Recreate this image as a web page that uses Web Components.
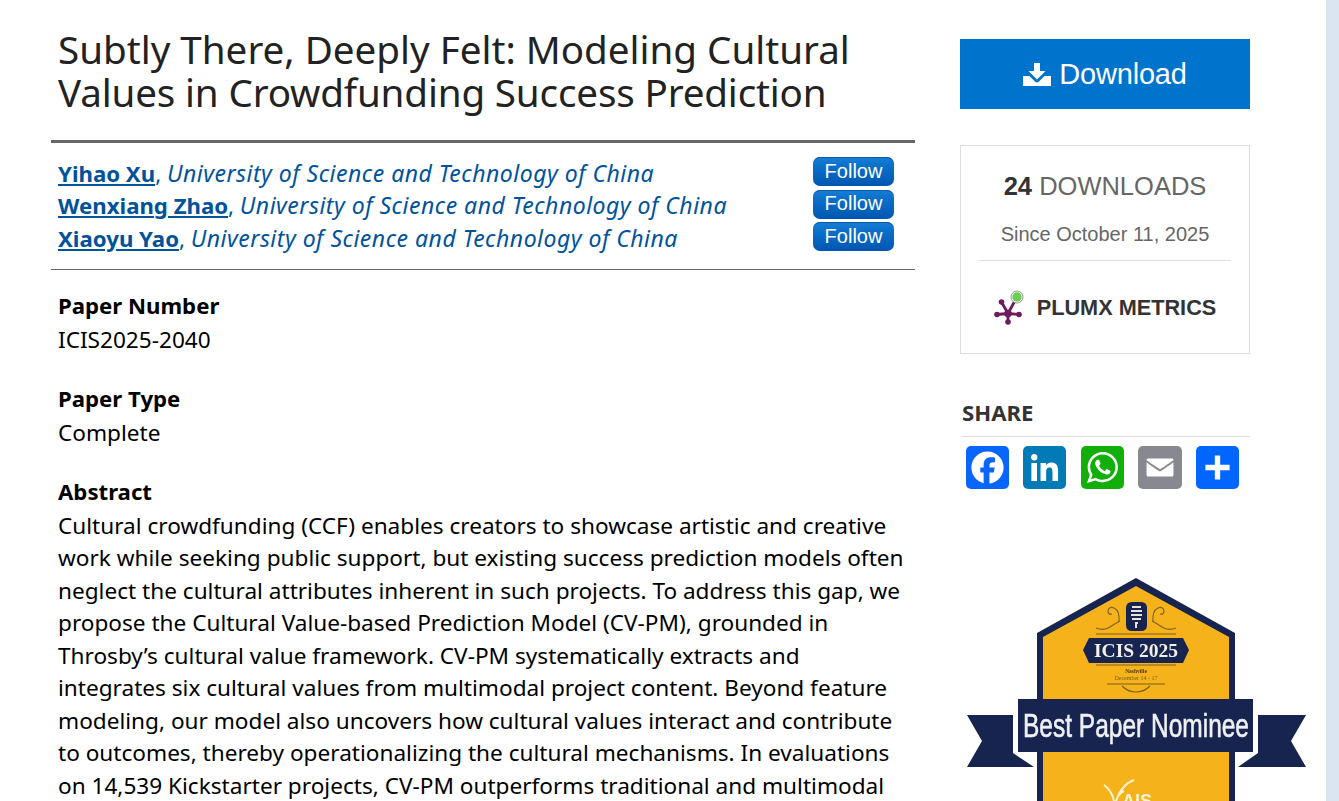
<!DOCTYPE html>
<html lang="en"><head><meta charset="utf-8"><title>Subtly There, Deeply Felt</title>
<style>
html,body{margin:0;padding:0;height:801px;overflow:hidden;background:#dbe5f2}
body{font-family:"Noto Sans",sans-serif;color:#000}
</style></head>
<body>
<paper-page>
  <paper-main slot="main">
    <paper-title><span style="display:block">Subtly There, Deeply Felt: Modeling Cultural</span><span style="display:block;letter-spacing:-.15px">Values in Crowdfunding Success Prediction</span></paper-title>
    <author-list>
      <author-row name="Yihao Xu" aff="University of Science and Technology of China"></author-row>
      <author-row name="Wenxiang Zhao" aff="University of Science and Technology of China"></author-row>
      <author-row name="Xiaoyu Yao" aff="University of Science and Technology of China"></author-row>
    </author-list>
    <meta-block label="Paper Number">ICIS2025-2040</meta-block>
    <meta-block label="Paper Type">Complete</meta-block>
    <meta-block label="Abstract" flush>
      <span class="l">Cultural crowdfunding (CCF) enables creators to showcase artistic and creative</span>
      <span class="l">work while seeking public support, but existing success prediction models often</span>
      <span class="l">neglect the cultural attributes inherent in such projects. To address this gap, we</span>
      <span class="l">propose the Cultural Value-based Prediction Model (CV-PM), grounded in</span>
      <span class="l">Throsby’s cultural value framework. CV-PM systematically extracts and</span>
      <span class="l">integrates six cultural values from multimodal project content. Beyond feature</span>
      <span class="l">modeling, our model also uncovers how cultural values interact and contribute</span>
      <span class="l">to outcomes, thereby operationalizing the cultural mechanisms. In evaluations</span>
      <span class="l">on 14,539 Kickstarter projects, CV-PM outperforms traditional and multimodal</span>
    </meta-block>
  </paper-main>
  <paper-side slot="side">
    <download-button></download-button>
    <metrics-box></metrics-box>
    <share-box></share-box>
    <award-badge></award-badge>
  </paper-side>
</paper-page>
<script>
function def(name, css, html, init){
  customElements.define(name, class extends HTMLElement{
    constructor(){super();this.attachShadow({mode:'open'}).innerHTML='<style>'+css+'</style>'+html;}
    connectedCallback(){ if(init) init(this); }
  });
}
const UB='"Noto Sans",sans-serif', AR='"Liberation Sans",Arial,sans-serif';
def('paper-page',`:host{display:flex;width:1326px;height:801px;background:#fff;padding-left:51px;box-sizing:border-box;gap:45px;overflow:hidden}`,
 `<slot name="main"></slot><slot name="side"></slot>`);
def('paper-main',`:host{display:block;width:864px;flex:none}`,`<slot></slot>`);
def('paper-side',`:host{display:block;width:290px;flex:none;padding-top:39px;box-sizing:content-box}`,`<slot></slot>`);
def('paper-title',`:host{display:block;font:400 38.6px/43px ${UB};color:#222;padding:28px 0 26px 7px;white-space:nowrap}`,`<slot></slot>`);
def('author-list',`:host{display:block;border-top:3px solid #666;border-bottom:1px solid #666;padding:14px 0 14.5px 7px;margin-bottom:19px}`,`<slot></slot>`);
def('author-row',`:host{display:flex;align-items:center;justify-content:space-between;height:32.5px;padding-right:21px;font:400 22.2px/32.5px ${UB};white-space:nowrap}
 a{color:#00529b;font-weight:700;text-decoration:underline;text-underline-offset:2px;text-decoration-thickness:2px}
 em{color:#00529b;font-style:italic;font-size:23px;letter-spacing:.5px} span{color:#00529b}
 button{width:81px;height:29px;margin-bottom:3.5px;padding:0 0 2px;border:0;border-radius:7px;background:linear-gradient(#1a7ed6 0,#0c72cc 25%,#0056b2 100%);box-shadow:inset 0 1px 0 #0a5aa5;color:#fff;font:20px/26px ${AR};flex:none}`,
 `<div><a href="#" id="n"></a><span>, </span><em id="a"></em></div><button>Follow</button>`,
 el=>{el.shadowRoot.getElementById('n').textContent=el.getAttribute('name');el.shadowRoot.getElementById('a').textContent=el.getAttribute('aff');});
def('meta-block',`:host{display:block;padding-left:7px;margin-bottom:25.9px;font:400 22.6px/32.5px ${UB};white-space:nowrap}
 h4{margin:0;font:700 22.2px/34.7px ${UB}} ::slotted(.l){display:block}`,
 `<h4 id="h"></h4><slot></slot>`, el=>{el.shadowRoot.getElementById('h').textContent=el.getAttribute('label');});
def('download-button',`:host{display:flex;align-items:center;justify-content:center;gap:8px;height:70px;background:#0074cc;color:#fff;font:29px/1 ${AR};letter-spacing:-.2px}
 svg{width:28px;height:24px;fill:#fff;flex:none}`,
 `<svg viewBox="0 0 28 24"><path d="M11 1h6v8h5.500L14 17.500 5.500 9H11zM0 14h6.500l5.500 5.500q2 2 4 0L21.500 14H28v10H0z"/></svg><span>Download</span>`);
def('metrics-box',`:host{display:block;margin-top:36px;height:209px;box-sizing:border-box;border:1px solid #ddd;font-family:${AR};color:#666;text-align:center}
 .d{font-size:25.5px;line-height:30px;padding-top:25px} b{color:#333}
 .s{font-size:20px;line-height:24px;margin-top:21px}
 hr{border:0;border-top:1px solid #ddd;margin:14px 18px 0}
 .p{display:flex;align-items:center;justify-content:center;gap:13px;margin-top:28px;color:#333;font-weight:700;font-size:21.7px;line-height:38px;padding-right:2px}
 svg{width:32px;height:38px;flex:none}`,
 `<div class="d"><b>24</b> DOWNLOADS</div><div class="s">Since October 11, 2025</div><hr>
 <div class="p"><svg viewBox="0 0 32 38"><path d="M16 24.500L5 25.500M16 24.500L27 25.500M16 24.500V33M16 24.500L9.500 13M16 24.500L25 8" fill="none" stroke="#6d1a5f" stroke-width="2.800"/><g fill="#6d1a5f"><circle cx="16" cy="24.500" r="3.800"/><circle cx="5" cy="25.500" r="2.800"/><circle cx="27" cy="25.500" r="2.800"/><circle cx="16" cy="33" r="2.800"/><circle cx="9.500" cy="13" r="2.800"/></g><circle cx="25" cy="8" r="6" fill="#fff" stroke="#999" stroke-width="1"/><circle cx="25" cy="8" r="4.700" fill="#66d04f"/></svg><span>PLUMX METRICS</span></div>`);
def('share-box',`:host{display:block;margin-top:44px;margin-left:2px}
 h3{margin:0;font:700 22.2px/30px ${UB};color:#333;border-bottom:1px solid #ddd;padding-bottom:8px}
 .r{display:flex;gap:14px;padding:9px 0 0 4px}
 svg{width:43px;height:43px;border-radius:5px;display:block;flex:none}`,
 `<h3>SHARE</h3><div class="r">
 <svg viewBox="0 0 32 32" style="background:#0866ff"><path fill="#fff" d="M28 16c0-6.627-5.373-12-12-12S4 9.373 4 16c0 5.628 3.875 10.350 9.101 11.647v-7.980h-2.474V16H13.100v-1.580c0-4.085 1.849-5.978 5.859-5.978.76 0 2.072.15 2.608.298v3.325c-.283-.03-.775-.045-1.386-.045-1.967 0-2.728.745-2.728 2.683V16h3.920l-.673 3.667h-3.247v8.245C23.395 27.195 28 22.135 28 16"/></svg>
 <svg viewBox="0 0 32 32" style="background:#007bb5"><path fill="#fff" d="M6.227 12.610h4.190v13.480h-4.190zm2.095-6.700a2.430 2.430 0 0 1 0 4.860c-1.344 0-2.428-1.090-2.428-2.430s1.084-2.430 2.428-2.430m4.720 6.700h4.020v1.840h.058c.56-1.058 1.927-2.176 3.965-2.176 4.238 0 5.020 2.792 5.020 6.420v7.395h-4.183v-6.560c0-1.564-.03-3.574-2.178-3.574-2.180 0-2.514 1.700-2.514 3.460v6.668h-4.187z"/></svg>
 <svg viewBox="0 0 32 32" style="background:#12af0a;margin-left:1px"><path fill="#fff" fill-rule="evenodd" d="M16.210 4.410C9.973 4.410 4.917 9.465 4.917 15.700c0 2.134.592 4.130 1.620 5.832L4.500 27.590l6.250-2.002a11.240 11.240 0 0 0 5.460 1.404c6.234 0 11.290-5.055 11.290-11.290 0-6.237-5.056-11.292-11.290-11.292m0 20.690c-1.910 0-3.690-.57-5.173-1.553l-3.610 1.156 1.173-3.490a9.350 9.350 0 0 1-1.790-5.512c0-5.180 4.217-9.400 9.400-9.400s9.397 4.220 9.397 9.400c0 5.188-4.214 9.400-9.398 9.400zm5.293-6.832c-.284-.155-1.673-.906-1.934-1.012-.265-.106-.455-.16-.658.12s-.78.91-.954 1.096c-.176.186-.345.203-.628.048-.282-.154-1.200-.494-2.264-1.517-.83-.795-1.373-1.760-1.530-2.055s-.016-.445.15-.584c.15-.124.33-.326.496-.488.167-.163.22-.28.335-.47.114-.19.07-.36-.004-.506-.074-.147-.6-1.592-.82-2.178-.22-.586-.465-.5-.64-.507-.175-.006-.37-.038-.57-.045a1.100 1.100 0 0 0-.8.335c-.28.277-1.046.94-1.100 2.340-.052 1.400.92 2.800 1.055 3 .133.2 1.855 3.220 4.710 4.470 2.858 1.250 2.873.87 3.400.838.523-.03 1.700-.62 1.960-1.270.26-.65.28-1.210.212-1.330-.07-.12-.26-.2-.54-.353"/></svg>
 <svg viewBox="0 0 32 32" style="background:#888990;width:44px"><path fill="#fff" d="M26 21.250v-9s-9.100 6.350-9.984 6.680C15.144 18.616 6 12.250 6 12.250v9c0 1.250.266 1.500 1.500 1.500h17c1.266 0 1.500-.22 1.500-1.500m-.015-10.765c0-.91-.265-1.235-1.485-1.235h-17c-1.255 0-1.500.39-1.500 1.300l.015.14s9.035 6.220 10 6.560c1.020-.395 9.985-6.700 9.985-6.700z"/></svg>
 <svg viewBox="0 0 32 32" style="background:#0166ff"><path fill="#fff" d="M14 7h4v18h-4zM7 14h18v4H7z"/></svg>
 </div>`);
def('award-badge',`:host{display:block;margin-top:88px;width:366px;height:224px}
 svg{display:block;width:366px;height:224px;filter:blur(.4px);overflow:hidden}`,
 `<svg viewBox="960 577 366 224" xmlns="http://www.w3.org/2000/svg">
 <path d="M1136 578L1235 633V801H1037V633Z" fill="#16244f"/>
 <path d="M1136 586L1229 637V801H1043V637Z" fill="#f5b21a"/>
 <path d="M967 715H1013V753L1034 767H967L982 741Z" fill="#16244f"/>
 <path d="M1306 715H1258V753L1238 767H1306L1291 741Z" fill="#16244f"/>
 <rect x="1018" y="699" width="235" height="53" fill="#16244f"/>
 <path d="M1126 608q0-6 6-6h9q6 0 6 6v17q0 6-6 6h-9q-6 0-6-6Z" fill="#16244f"/>
 <path d="M1132 607h9M1131 611h11M1131 615h11M1132 619h9M1135 623h3M1136 623v5" stroke="#e8e4da" stroke-width="2"/>
 <g stroke="#7d6122" stroke-width="1.200" fill="none">
  <path d="M1096 628q8 3 14-1t10-6M1119 621q1-10-5-13q-5-2-6 3q0 4 4 3"/><path d="M1176 628q-8 3-14-1t-10-6M1153 621q-1-10 5-13q5-2 6 3q0 4-4 3"/>
  <path d="M1096 634H1176M1096 665H1176"/>
  <path d="M1107 684H1165M1122 686q6 6 14 6q8 0 14-6"/>
 </g>
 <path d="M1083 650l6-12h94l6 12l-6 13H1089Z" fill="#16244f"/>
 <text x="1136" y="656.500" text-anchor="middle" font-family="Liberation Serif,serif" font-weight="700" font-size="19.500" fill="#f2efe6" textLength="84" lengthAdjust="spacingAndGlyphs">ICIS 2025</text>
 <text x="1136" y="672.500" text-anchor="middle" font-family="Liberation Serif,serif" font-weight="700" font-size="5.500" fill="#4a3a15">Nashville</text>
 <text x="1136" y="680" text-anchor="middle" font-family="Liberation Serif,serif" font-size="6" fill="#7a5f1e">December 14 - 17</text>
 <text x="1136" y="737" text-anchor="middle" font-family="Liberation Sans,sans-serif" font-size="33" fill="#eef0f3" textLength="226" lengthAdjust="spacingAndGlyphs" stroke="#eef0f3" stroke-width=".6">Best Paper Nominee</text>
 <text x="1137" y="807" text-anchor="middle" font-family="Liberation Sans,sans-serif" font-weight="700" font-size="18" fill="#fff3d0">AIS</text>
 <path d="M1104 785q8 6 10 16M1134 780q-12 4-18 21M1124 791q-6 3-8 10" stroke="#fff3d0" stroke-width="2" fill="none"/>
 </svg>`);
</script>
</body></html>
